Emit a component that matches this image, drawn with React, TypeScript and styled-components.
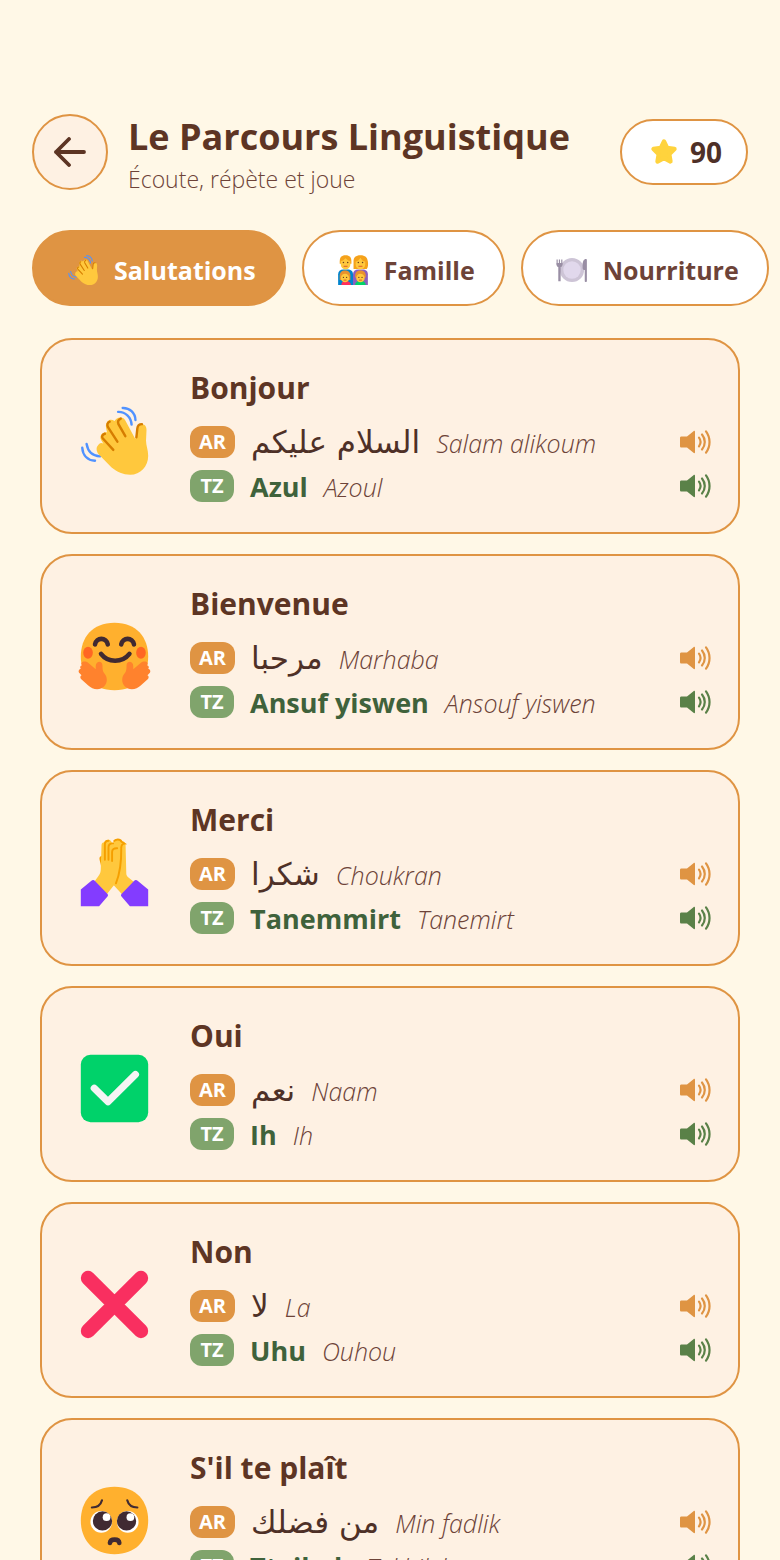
import React, { useState } from 'react';
import styled, { createGlobalStyle } from 'styled-components';

interface Phrase {
  french: string;
  emoji: React.FC<IconProps>;
  arabic: string;
  arabicSound: string;
  tamazight: string;
  tamazightSound: string;
}

interface IconProps {
  size: number;
}

const Emoji = ({ size, children }: IconProps & { children: React.ReactNode }) => (
  <svg width={size} height={size} viewBox="0 0 32 32" fill="none" aria-hidden="true">
    {children}
  </svg>
);

const WaveEmoji = ({ size }: IconProps) => (
  <Emoji size={size}>
    <g stroke="#5092FF" strokeWidth="1" strokeLinecap="round">
      <path d="M19.4 2.5c2.9-.1 5.2 2 5.3 5" />
      <path d="M17.5 4.1c3-.1 5.4 2.2 5.6 5.3" />
      <path d="M4.4 17.4c.5 3.1 2.5 5 5.6 5.2" />
      <path d="M2.6 19c.2 3.2 2.2 5.2 5.3 5.4" />
    </g>
    <path
      d="M9.5 17.6c.5-.6 1.2-.7 1.9-.3l-.9-1.4c-.6-1-.4-2 .3-2.700.6-.6 1.400-.8 2.100-.6l-.4-1.700c-.3-1.500.2-2.700 1.200-3.300.8-.4 1.500-.2 2.300.3.400-.9 1.400-1.500 2.500-1.500 1 0 1.600.5 2 1.300l4.200 7.800.5-4c.2-1.600 1-2.400 2.300-2.300 1.200.1 1.900 1.100 1.800 2.500l-.2 4.400c0 2 .9 3.700.9 6.200 0 4.500-3.200 7.900-7.500 7.900-3 0-5.400-1.200-7.700-3l-5.400-5.500c-1.100-1.200-1-3-.3-3.600Z"
      fill="#FFC83D"
    />
    <g stroke="#D67D00" strokeWidth="1" strokeLinecap="round">
      <path d="M12 13.2c-1 .3-1.500 1.100-.9 1.900l4.400 4.800" />
      <path d="M14 8.200c-1 .4-1.200 1.300-.7 2.300l3.900 6" />
      <path d="M18.600 6.900c-1 .4-1.300 1.300-1 2.200l2.900 5.100" />
      <path d="M27.400 9.200c-1.200 0-1.800.8-1.900 1.800l-.4 3.700" />
    </g>
  </Emoji>
);

const FACE =
  'M16 30c9.330 0 14-6.270 14-14S25.330 2 16 2 2 8.270 2 16s4.670 14 14 14Z';

const HUG_HAND =
  'M9.6 18.2c-.9 0-1.400.9-1.400 1.900v1.200l-3.300-2.800c-.8-.6-1.400-.5-2.100-.3-.7.3-.7 1-.3 1.400-.8.200-1 1-.5 1.500-.9.300-1.200 1.200-.5 1.900l.8.800c-.6.400-.7 1.100-.1 1.700l2.900 2.500c1.100 1 2.200 1.600 3.700 1.600 2.300 0 4-1.700 4-3.900 0-1.100-.4-2-1.200-2.900-.5-.8-.6-1.800-.6-3 0-.9-.5-1.600-1.400-1.600Z';

const HugEmoji = ({ size }: IconProps) => (
  <Emoji size={size}>
    <path d={FACE} fill="#FFB02E" />
    <ellipse cx="5" cy="14.4" rx="2" ry="2.5" fill="#FF6723" />
    <ellipse cx="27" cy="14.4" rx="2" ry="2.5" fill="#FF6723" />
    <g stroke="#402A32" strokeWidth="1.9" strokeLinecap="round">
      <path d="M7.900 11c.5-3.100 4.800-3.100 5.300 0" />
      <path d="M18.800 11c.5-3.100 4.800-3.100 5.300 0" />
      <path d="M10.400 14.900c2.900 3.800 8.800 3.800 11.800 0" />
    </g>
    <path d={HUG_HAND} fill="#FF822D" />
    <path d={HUG_HAND} fill="#FF822D" transform="translate(32 0) scale(-1 1)" />
  </Emoji>
);

const PrayEmoji = ({ size }: IconProps) => (
  <Emoji size={size}>
    <path d="M10.900 9c-1 .1-1.300.7-1.100 1.700l.6 2.500Z" fill="#F59F00" />
    <path
      d="M15.500 3.200c.5-1.200 2.800-1.500 3.400-.2.900-.2 1.700.4 1.700 1.400l.3 12c0 .8.400 1.200.9 1.700l2.700 2.200-5.200 4.900-3.700-4Z"
      fill="#FFC83D"
    />
    <path d="M15.700 3.100c.6-1 2.700-1.200 3.200.1l1.200.8c-1 .1-1.300.8-1.300 1.800" stroke="#F59F00" strokeWidth="0.8" />
    <path
      d="M10.600 4.700c0-.8.500-1.300 1.200-1.300.5-1.200 2-1.300 2.800-.4l.4.800c1 0 1.500.7 1.500 1.800 1.200.100 1.700.7 1.700 1.700l-.2 8.600c-.1 2-.9 3.500-2 5.100l-3.200 4-5.100-5.300 1.700-2.300c.6-.8.900-1.700.9-2.700Z"
      fill="#FFC83D"
    />
    <g stroke="#F59F00" strokeWidth="0.8" strokeLinecap="round">
      <path d="M12 10.700V4.300c0-1 .6-1.500 1.500-1.500" />
      <path d="M13.500 10.700V5.500c0-1.100.7-1.700 1.900-1.600" />
      <path d="M15 11.200V7.500c0-1.100.8-1.700 2.100-1.600" />
      <path d="M18.800 6c.1 6.500-.4 10-2.200 14.500" />
    </g>
    <path d="M2 23.100l4.400-3.700c.5-.4 1.100-.3 1.500.1l5.100 5.300c.4.400.4.900 0 1.300l-3.400 3.900H2Z" fill="#833CFF" />
    <path d="M30 23.100l-4.400-3.700c-.5-.4-1.100-.3-1.500.1L19 24.800c-.4.400-.4.900 0 1.300l3.400 3.900H30Z" fill="#833CFF" />
  </Emoji>
);

const CheckEmoji = ({ size }: IconProps) => (
  <Emoji size={size}>
    <rect x="2" y="2" width="28" height="28" rx="4" fill="#00D26A" />
    <path d="M7.600 15.900l5.700 5.600L24.700 10.200" stroke="#F4F4F4" strokeWidth="3" strokeLinecap="round" strokeLinejoin="round" />
  </Emoji>
);

const CrossEmoji = ({ size }: IconProps) => (
  <Emoji size={size}>
    <path d="M5 5l22 22M27 5L5 27" stroke="#F92F60" strokeWidth="6" strokeLinecap="round" />
  </Emoji>
);

const PleadEmoji = ({ size }: IconProps) => (
  <Emoji size={size}>
    <path d={FACE} fill="#FFB02E" />
    <circle cx="10.5" cy="16.6" r="4.5" fill="#fff" />
    <circle cx="21.5" cy="16.6" r="4.5" fill="#fff" />
    <circle cx="11" cy="16.2" r="4" fill="#402A32" />
    <circle cx="21" cy="16.2" r="4" fill="#402A32" />
    <circle cx="12.7" cy="14.6" r="1.6" fill="#fff" />
    <circle cx="22.6" cy="14.6" r="1.6" fill="#fff" />
    <g stroke="#402A32" strokeWidth="0.9" strokeLinecap="round">
      <path d="M10.800 7.600c-.5 1.900-2 3-4.200 3" />
      <path d="M21.300 7.600c.5 1.900 2 3 4.200 3" />
    </g>
    <path d="M14.100 25.300c.2-1.800 3.700-1.800 3.900 0" stroke="#402A32" strokeWidth="1.9" strokeLinecap="round" />
  </Emoji>
);

const FamilyEmoji = ({ size }: IconProps) => (
  <Emoji size={size}>
    <path d="M2 30V20c0-3 2-4.500 5-4.500h4c3 0 5 1.500 5 4.500v10Z" fill="#0084CE" />
    <path d="M16 30V20c0-3 2-4.500 5-4.500h4c3 0 5 1.500 5 4.500v10Z" fill="#8B5FBF" />
    <path d="M3.500 8c0-4 1.500-6 5.500-6s5.500 2 5.500 6v2h-11Z" fill="#F5A21B" />
    <path d="M16.500 15V8c0-4 2-6 6.500-6s6.500 2 7 6c.4 3 .2 5.500-1 7Z" fill="#F5A21B" />
    <path d="M4.500 7.500C6.500 7.500 8 6 9 5c1 1 2.500 2.500 4.500 2.500V11a4.500 4.500 0 0 1-9 0Z" fill="#FFC83D" />
    <path d="M18.500 8c2 0 3-1.500 4.500-3.500C24 6.500 25.500 8 27.500 8v3a4.500 4.500 0 0 1-9 0Z" fill="#FFC83D" />
    <path d="M5 30c0-2.500 1.500-4 4-4s5 1.500 5 4Z" fill="#FF2F5C" />
    <path d="M18 30c0-2.500 2-4 5-4s5 1.500 5 4Z" fill="#00D26A" />
    <path d="M3.500 25.500v-4c0-3.500 2-5 5-5s5 1.500 5 5v4Z" fill="#E8912D" />
    <path d="M18 23v-1.500c0-3.500 2-5 5-5s5 1.500 5 5V23Z" fill="#E8912D" />
    <circle cx="8.5" cy="23.5" r="4" fill="#FFC83D" />
    <circle cx="23" cy="23.5" r="4" fill="#FFC83D" />
    <g fill="#6B3F1D">
      <circle cx="7" cy="9" r=".7" />
      <circle cx="11" cy="9" r=".7" />
      <circle cx="21" cy="9" r=".7" />
      <circle cx="25" cy="9" r=".7" />
      <circle cx="7" cy="23" r=".6" />
      <circle cx="10" cy="23" r=".6" />
      <circle cx="21.5" cy="23" r=".6" />
      <circle cx="24.5" cy="23" r=".6" />
    </g>
    <path d="M7.500 12.500h3M21.500 12.500h3M7.500 25.500h2M22 25.500h2" stroke="#E0542B" strokeWidth="0.9" strokeLinecap="round" />
  </Emoji>
);

const PlateEmoji = ({ size }: IconProps) => (
  <Emoji size={size}>
    <circle cx="16" cy="16" r="11.4" fill="#CDC4D6" />
    <circle cx="16" cy="16" r="8.2" fill="#E1D8EC" />
    <path d="M2 6v5M4.200 6v5M6.400 6v5" stroke="#998EA4" strokeWidth="1.100" />
    <path d="M3.100 12h2.200v14.500H3.100ZM1.500 9.500H7V11c0 1.300-.9 2.200-2.200 2.200H3.700c-1.300 0-2.200-.9-2.200-2.200Z" fill="#998EA4" />
    <path d="M30 6.500v20c0 1-2 1-2 0V16c-1.300 0-2-.8-2-2v-3c0-3 1.200-5.300 3-5.300.6 0 1 .3 1 .8Z" fill="#998EA4" />
  </Emoji>
);

const StarIcon = ({ size }: IconProps) => (
  <Emoji size={size}>
    <path
      d="M16 4l3.600 7.300 8.400 1.200-6 5.900 1.400 8.400L16 23l-7.400 3.800 1.400-8.400-6-5.900 8.400-1.200Z"
      fill="#FFD33D"
      stroke="#FFD33D"
      strokeWidth="5"
      strokeLinejoin="round"
    />
  </Emoji>
);

const BackIcon = () => (
  <svg width="32" height="30" viewBox="0 0 32 30" fill="none" aria-hidden="true">
    <path d="M15 2L2 15l13 13M2 15h28" stroke="#5D3524" strokeWidth="3.800" strokeLinecap="round" strokeLinejoin="round" />
  </svg>
);

const SpeakerIcon = () => (
  <svg width="32" height="26" viewBox="0 0 32 26" fill="none" aria-hidden="true">
    <path
      d="M1.500 7.500H7l6.500-5.300c.8-.6 1.500-.4 1.500.6v20.400c0 1-.7 1.200-1.500.6L7 18.500H1.500C.5 18.500 0 18 0 17V9c0-1 .5-1.500 1.500-1.500Z"
      fill="currentColor"
    />
    <g stroke="currentColor" strokeWidth="2.200" strokeLinecap="round">
      <path d="M19 8.700c1.900 2.600 1.900 6 0 8.600" />
      <path d="M22 5.500c3.700 4.500 3.700 10.500 0 15" />
      <path d="M26 2.300c4.700 6.400 4.700 15 0 21.400" />
    </g>
  </svg>
);

const CATEGORIES = [
  { label: 'Salutations', icon: WaveEmoji },
  { label: 'Famille', icon: FamilyEmoji },
  { label: 'Nourriture', icon: PlateEmoji },
];

const PHRASES: Phrase[] = [
  {
    french: 'Bonjour',
    emoji: WaveEmoji,
    arabic: 'السلام عليكم',
    arabicSound: 'Salam alikoum',
    tamazight: 'Azul',
    tamazightSound: 'Azoul',
  },
  {
    french: 'Bienvenue',
    emoji: HugEmoji,
    arabic: 'مرحبا',
    arabicSound: 'Marhaba',
    tamazight: 'Ansuf yiswen',
    tamazightSound: 'Ansouf yiswen',
  },
  {
    french: 'Merci',
    emoji: PrayEmoji,
    arabic: 'شكرا',
    arabicSound: 'Choukran',
    tamazight: 'Tanemmirt',
    tamazightSound: 'Tanemirt',
  },
  {
    french: 'Oui',
    emoji: CheckEmoji,
    arabic: 'نعم',
    arabicSound: 'Naam',
    tamazight: 'Ih',
    tamazightSound: 'Ih',
  },
  {
    french: 'Non',
    emoji: CrossEmoji,
    arabic: 'لا',
    arabicSound: 'La',
    tamazight: 'Uhu',
    tamazightSound: 'Ouhou',
  },
  {
    french: "S'il te plaît",
    emoji: PleadEmoji,
    arabic: 'من فضلك',
    arabicSound: 'Min fadlik',
    tamazight: 'Ttxil-ek',
    tamazightSound: 'Tekhilek',
  },
];

const App = () => {
  const [category, setCategory] = useState('Salutations');

  return (
    <Screen>
      <GlobalStyle />
      <Header>
        <BackButton aria-label="Retour">
          <BackIcon />
        </BackButton>
        <Heading>
          <Title>Le Parcours Linguistique</Title>
          <Subtitle>Écoute, répète et joue</Subtitle>
        </Heading>
        <Score>
          <StarIcon size={28} />
          90
        </Score>
      </Header>

      <Tabs>
        {CATEGORIES.map(({ label, icon: Icon }) => (
          <Tab
            key={label}
            $active={label === category}
            aria-pressed={label === category}
            onClick={() => setCategory(label)}
          >
            <Icon size={34} />
            {label}
          </Tab>
        ))}
      </Tabs>

      <List>
        {PHRASES.map(({ emoji: Icon, ...phrase }) => (
          <Card key={phrase.french}>
            <Picture>
              <Icon size={77} />
            </Picture>
            <Content>
              <Word>{phrase.french}</Word>
              <Row>
                <Badge $lang="ar">AR</Badge>
                <Arabic lang="ar" dir="rtl">{phrase.arabic}</Arabic>
                <Sound>{phrase.arabicSound}</Sound>
                <Play $lang="ar" aria-label="Écouter en arabe">
                  <SpeakerIcon />
                </Play>
              </Row>
              <Row>
                <Badge $lang="tz">TZ</Badge>
                <Tamazight>{phrase.tamazight}</Tamazight>
                <Sound>{phrase.tamazightSound}</Sound>
                <Play $lang="tz" aria-label="Écouter en tamazight">
                  <SpeakerIcon />
                </Play>
              </Row>
            </Content>
          </Card>
        ))}
      </List>
    </Screen>
  );
};

export default App;

const GlobalStyle = createGlobalStyle`
  * {
    box-sizing: border-box;
  }

  body {
    margin: 0;
    background: #fff8e7;
    font-family: 'Open Sans', 'Noto Sans', 'DejaVu Sans', sans-serif;
  }

  button {
    font-family: inherit;
    cursor: pointer;
  }

  svg {
    display: block;
    flex-shrink: 0;
  }
`;

const Screen = styled.div`
  display: flex;
  flex-direction: column;
  height: 100vh;
  padding-top: 114px;
  overflow: hidden;
`;

const Header = styled.header`
  display: flex;
  align-items: center;
  flex-shrink: 0;
  gap: 20px;
  height: 76px;
  padding: 0 32px;
`;

const BackButton = styled.button`
  display: flex;
  align-items: center;
  justify-content: center;
  flex-shrink: 0;
  width: 76px;
  height: 76px;
  padding: 0;
  border: 2px solid #df9443;
  border-radius: 50%;
  background: #fef1e3;
`;

const Heading = styled.div`
  flex: 1;
  min-width: 0;
  padding-top: 6px;
  white-space: nowrap;
`;

const Title = styled.h1`
  margin: 0;
  color: #5d3524;
  font-size: 36px;
  font-weight: 700;
  line-height: 48px;
`;

const Subtitle = styled.p`
  margin: 0;
  color: #6d4338;
  font-size: 23px;
  font-weight: 350;
  line-height: 36px;
`;

const Score = styled.div`
  display: flex;
  align-items: center;
  justify-content: center;
  flex-shrink: 0;
  gap: 12px;
  width: 128px;
  height: 66px;
  padding-left: 4px;
  border: 2px solid #df9443;
  border-radius: 33px;
  background: #fff;
  color: #4e3027;
  font-size: 28px;
  font-weight: 700;
`;

const Tabs = styled.nav`
  display: flex;
  flex-shrink: 0;
  gap: 16px;
  margin-top: 40px;
  padding: 0 32px;
  overflow-x: auto;
  scrollbar-width: none;
`;

const Tab = styled.button<{ $active: boolean }>`
  display: flex;
  align-items: center;
  flex-shrink: 0;
  gap: 14px;
  height: 76px;
  padding: 4px 28px 0 32px;
  border: 2px solid #df9443;
  border-radius: 38px;
  background: ${({ $active }) => ($active ? '#df9443' : '#fff')};
  color: ${({ $active }) => ($active ? '#fff' : '#6d4338')};
  font-size: 25px;
  font-weight: 700;
`;

const List = styled.main`
  display: flex;
  flex: 1;
  flex-direction: column;
  gap: 20px;
  min-height: 0;
  margin-top: 32px;
  padding: 0 40px 40px;
  overflow-y: auto;
  scrollbar-width: none;
`;

const Card = styled.article`
  display: flex;
  flex-shrink: 0;
  gap: 32px;
  padding: 24px 26px 24px 28px;
  border: 2px solid #df9443;
  border-radius: 32px;
  background: #fef1e3;
`;

const Picture = styled.div`
  display: flex;
  align-items: center;
  justify-content: center;
  width: 88px;
  padding-top: 8px;
`;

const Content = styled.div`
  flex: 1;
  min-width: 0;
`;

const Word = styled.h2`
  margin: 0 0 8px;
  color: #5d3524;
  font-size: 30px;
  font-weight: 700;
  line-height: 48px;
`;

const Row = styled.div`
  display: flex;
  align-items: center;
  gap: 16px;
  height: 44px;
  line-height: 44px;
  white-space: nowrap;
`;

const Badge = styled.span<{ $lang: 'ar' | 'tz' }>`
  min-width: 44px;
  padding: 0 9px;
  border-radius: 12px;
  background: ${({ $lang }) => ($lang === 'ar' ? '#df9443' : '#80a46c')};
  color: #fff;
  font-size: 20px;
  font-weight: 700;
  line-height: 32px;
  text-align: center;
`;

const Arabic = styled.span`
  color: #4e3027;
  font-family: 'DejaVu Sans', sans-serif;
  font-size: 31px;
`;

const Tamazight = styled.strong`
  padding-top: 2px;
  color: #3f623b;
  font-size: 27px;
  font-weight: 700;
`;

const Sound = styled.em`
  padding-top: 2px;
  color: #6d4338;
  font-size: 25px;
  font-weight: 350;
`;

const Play = styled.button<{ $lang: 'ar' | 'tz' }>`
  margin-left: auto;
  padding: 0;
  border: none;
  background: none;
  color: ${({ $lang }) => ($lang === 'ar' ? '#df9443' : '#5a8148')};
`;
